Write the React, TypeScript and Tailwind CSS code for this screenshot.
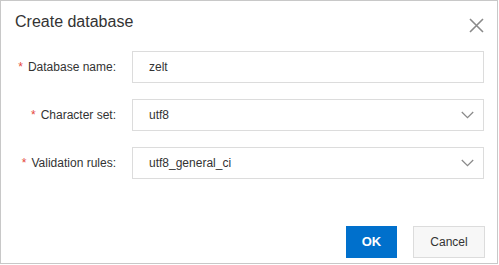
import React from "react";

const FONT = "font-['Liberation_Sans',Arial,sans-serif]";

function Chevron() {
  return (
    <svg width="13" height="8" viewBox="0 0 13 8" className="absolute right-[9px] top-1/2 -translate-y-1/2">
      <path d="M0.8 1 L6.5 6.6 L12.2 1" fill="none" stroke="#8a8a8a" strokeWidth="1.3" />
    </svg>
  );
}

function Row({ label, value, select, indent }: { label: string; value: string; select?: boolean; indent?: boolean }) {
  return (
    <div className="flex items-center h-[32px]">
      <div className="w-[115px] text-right text-[12px] text-[#333] whitespace-nowrap">
        <span className="text-[#e5483c] mr-[5px]">*</span>
        {label}
      </div>
      <div className="relative ml-[16px] w-[352px] h-[32px] border border-[#dcdcdc] bg-white flex items-center pl-[16px] text-[12px] text-[#333]">
        {value}
        {select && <Chevron />}
      </div>
    </div>
  );
}

export default function App() {
  return (
    <div className={`${FONT} bg-white w-[499px] h-[265px]`}>
      <div className="w-[498px] h-[264px] border border-[#c8c8c8] flex flex-col">
        {/* Header */}
        <div className="flex items-start justify-between pl-[14px] pr-[13px] pt-[10px] h-[50px]">
          <h1 className="text-[16px] leading-[22px] text-[#333]">Create database</h1>
          <svg width="15" height="15" viewBox="0 0 15 15" className="mt-[7px]">
            <path d="M1 1 L14 14 M14 1 L1 14" stroke="#8a8a8a" strokeWidth="1.6" />
          </svg>
        </div>

        {/* Form */}
        <div className="flex flex-col gap-[16px]">
          <Row label="Database name:" value="zelt" />
          <Row label="Character set:" value="utf8" select />
          <Row label="Validation rules:" value="utf8_general_ci" select />
        </div>

        {/* Footer */}
        <div className="flex justify-end gap-[16px] pr-[12px] mt-[47px]">
          <button className="w-[51px] h-[32px] bg-[#0070cc] text-white text-[13px] font-bold">OK</button>
          <button className="w-[72px] h-[32px] bg-[#f7f7f7] border border-[#dcdcdc] text-[#333] text-[12px]">Cancel</button>
        </div>
      </div>
    </div>
  );
}
